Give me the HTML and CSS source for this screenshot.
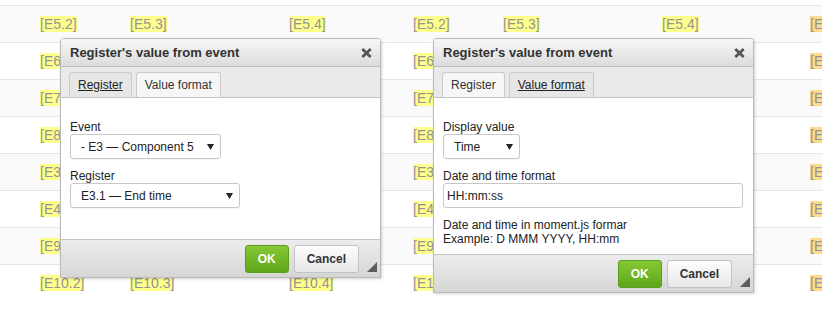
FILE: index.html
```html
<!DOCTYPE html>
<html lang="en">
<head>
<meta charset="utf-8">
<title>Register's value from event</title>
<link rel="stylesheet" href="styles.css">
</head>
<body>
<div class="shots">

  <div class="shot">
    <div class="page">
      <div class="grid">
        <div class="row"><span class="cell">[E5.2]</span><span class="cell">[E5.3]</span><span class="cell">[E5.4]</span><span class="cell cell--alt">[E5.5]</span></div>
        <div class="row"><span class="cell">[E6.2]</span><span class="cell">[E6.3]</span><span class="cell">[E6.4]</span><span class="cell cell--alt">[E6.5]</span></div>
        <div class="row"><span class="cell">[E7.2]</span><span class="cell">[E7.3]</span><span class="cell">[E7.4]</span><span class="cell cell--alt">[E7.5]</span></div>
        <div class="row"><span class="cell">[E8.2]</span><span class="cell">[E8.3]</span><span class="cell">[E8.4]</span><span class="cell cell--alt">[E8.5]</span></div>
        <div class="row"><span class="cell">[E3.2]</span><span class="cell">[E3.3]</span><span class="cell">[E3.4]</span><span class="cell cell--alt">[E3.5]</span></div>
        <div class="row"><span class="cell">[E4.2]</span><span class="cell">[E4.3]</span><span class="cell">[E4.4]</span><span class="cell cell--alt">[E4.5]</span></div>
        <div class="row"><span class="cell">[E9.2]</span><span class="cell">[E9.3]</span><span class="cell">[E9.4]</span><span class="cell cell--alt">[E9.5]</span></div>
        <div class="row row--last"><span class="cell">[E10.2]</span><span class="cell">[E10.3]</span><span class="cell">[E10.4]</span><span class="cell cell--alt">[E10.5]</span></div>
      </div>

      <div class="dialog">
        <div class="dialog-titlebar">
          <span class="dialog-title">Register's value from event</span>
          <span class="dialog-close"><svg width="11" height="10" viewBox="0 0 11 10"><path d="M1.3 1 L9.7 9 M9.7 1 L1.3 9" stroke="#555" stroke-width="2.8" fill="none"/></svg></span>
        </div>
        <div class="tabbar">
          <span class="tab tab--active">Register</span>
          <span class="tab">Value format</span>
        </div>
        <div class="dialog-body dialog-body--register">
          <div class="field">
            <div class="label">Event</div>
            <div class="select select--event"><span>- E3 — Component 5</span><svg width="7" height="6" viewBox="0 0 7 6"><polygon points="0,0 7,0 3.5,6" fill="#222"/></svg></div>
          </div>
          <div class="field">
            <div class="label">Register</div>
            <div class="select select--register"><span>E3.1 — End time</span><svg width="7" height="6" viewBox="0 0 7 6"><polygon points="0,0 7,0 3.5,6" fill="#222"/></svg></div>
          </div>
        </div>
        <div class="dialog-footer">
          <button class="btn btn--ok">OK</button>
          <button class="btn btn--cancel">Cancel</button>
          <svg class="grip" width="10" height="10" viewBox="0 0 10 10"><polygon points="10,0 10,10 0,10" fill="#5c5c5c"/></svg>
        </div>
      </div>
    </div>
  </div>

  <div class="shot shot--shifted">
    <div class="page">
      <div class="grid">
        <div class="row"><span class="cell">[E5.2]</span><span class="cell">[E5.3]</span><span class="cell">[E5.4]</span><span class="cell cell--alt">[E5.5]</span></div>
        <div class="row"><span class="cell">[E6.2]</span><span class="cell">[E6.3]</span><span class="cell">[E6.4]</span><span class="cell cell--alt">[E6.5]</span></div>
        <div class="row"><span class="cell">[E7.2]</span><span class="cell">[E7.3]</span><span class="cell">[E7.4]</span><span class="cell cell--alt">[E7.5]</span></div>
        <div class="row"><span class="cell">[E8.2]</span><span class="cell">[E8.3]</span><span class="cell">[E8.4]</span><span class="cell cell--alt">[E8.5]</span></div>
        <div class="row"><span class="cell">[E3.2]</span><span class="cell">[E3.3]</span><span class="cell">[E3.4]</span><span class="cell cell--alt">[E3.5]</span></div>
        <div class="row"><span class="cell">[E4.2]</span><span class="cell">[E4.3]</span><span class="cell">[E4.4]</span><span class="cell cell--alt">[E4.5]</span></div>
        <div class="row"><span class="cell">[E9.2]</span><span class="cell">[E9.3]</span><span class="cell">[E9.4]</span><span class="cell cell--alt">[E9.5]</span></div>
        <div class="row row--last"><span class="cell">[E10.2]</span><span class="cell">[E10.3]</span><span class="cell">[E10.4]</span><span class="cell cell--alt">[E10.5]</span></div>
      </div>

      <div class="dialog">
        <div class="dialog-titlebar">
          <span class="dialog-title">Register's value from event</span>
          <span class="dialog-close"><svg width="11" height="10" viewBox="0 0 11 10"><path d="M1.3 1 L9.7 9 M9.7 1 L1.3 9" stroke="#555" stroke-width="2.8" fill="none"/></svg></span>
        </div>
        <div class="tabbar">
          <span class="tab">Register</span>
          <span class="tab tab--active">Value format</span>
        </div>
        <div class="dialog-body dialog-body--format">
          <div class="field">
            <div class="label">Display value</div>
            <div class="select select--display"><span>Time</span><svg width="7" height="6" viewBox="0 0 7 6"><polygon points="0,0 7,0 3.5,6" fill="#222"/></svg></div>
          </div>
          <div class="field">
            <div class="label">Date and time format</div>
            <div class="input">HH:mm:ss</div>
          </div>
          <div class="help">Date and time in moment.js formar<br>Example: D MMM YYYY, HH:mm</div>
        </div>
        <div class="dialog-footer">
          <button class="btn btn--ok">OK</button>
          <button class="btn btn--cancel">Cancel</button>
          <svg class="grip" width="10" height="10" viewBox="0 0 10 10"><polygon points="10,0 10,10 0,10" fill="#5c5c5c"/></svg>
        </div>
      </div>
    </div>
  </div>

</div>
</body>
</html>
```

FILE: styles.css
```css
html, body {
  margin: 0;
  padding: 0;
  background: #fff;
  font-family: "Liberation Sans", Arial, sans-serif;
}

.shots {
  display: flex;
  width: 822px;
  height: 326px;
  overflow: hidden;
}

.shot {
  flex: none;
  width: 411px;
  height: 326px;
  overflow: hidden;
}

.page {
  position: relative;
  width: 480px;
  height: 326px;
  padding-top: 5px;
  box-sizing: border-box;
}

.shot--shifted .page {
  margin-left: -38px;
}

.row {
  height: 37px;
  box-sizing: border-box;
  border-top: 1px solid #e6e6e6;
  display: grid;
  grid-template-columns: 90px 159px 148px auto;
  padding-left: 40px;
  align-items: center;
}

.row:nth-child(odd) {
  background: #fafafa;
}

.row--last {
  background: #fff;
}

.cell {
  justify-self: start;
  font-size: 14px;
  line-height: 16px;
  color: #949494;
  background: #ffff8c;
}

.cell--alt {
  background: #ffd98c;
}

/* dialog */
.dialog {
  position: absolute;
  left: 60px;
  top: 38px;
  width: 321px;
  box-sizing: border-box;
  border: 1px solid #b9b9b9;
  border-radius: 4px 4px 0 0;
  background: #fff;
  box-shadow: 1px 1px 3px rgba(0, 0, 0, 0.18);
}

.dialog-titlebar {
  height: 28px;
  box-sizing: border-box;
  display: flex;
  align-items: center;
  justify-content: space-between;
  padding: 0 8px 0 9px;
  background: linear-gradient(#f7f7f7, #dcdcdc);
  border-bottom: 1px solid #bcbcbc;
  border-radius: 3px 3px 0 0;
}

.dialog-title {
  font-size: 13px;
  font-weight: bold;
  color: #333;
}

.dialog-close {
  display: flex;
  margin-top: 1px;
}

.tabbar {
  height: 31px;
  box-sizing: border-box;
  display: flex;
  align-items: flex-end;
  gap: 4px;
  padding: 5px 0 0 8px;
  background: #eaeaea;
  border-bottom: 1px solid #c4c4c4;
}

.tab {
  height: 25px;
  box-sizing: border-box;
  display: flex;
  align-items: center;
  padding: 0 8px;
  border: 1px solid #cbcbcb;
  border-bottom: none;
  border-radius: 3px 3px 0 0;
  background: #f6f6f6;
  font-size: 12px;
  color: #333;
}

.tab--active {
  background: #e6e6e6;
  text-decoration: underline;
  color: #222;
}

.dialog-body {
  padding: 22px 9px 9px;
  background: #fff;
}

.dialog-body--register {
  padding-bottom: 31px;
}

.dialog-body--format {
  padding-bottom: 8px;
}

.field + .field {
  margin-top: 10px;
}

.label {
  font-size: 12px;
  line-height: 14px;
  color: #222;
}

.select {
  display: flex;
  align-items: center;
  justify-content: space-between;
  height: 25px;
  box-sizing: border-box;
  padding: 0 6px 0 10px;
  border: 1px solid #c8c8c8;
  border-radius: 3px;
  background: #fff;
  box-shadow: 0 1px 1px rgba(0, 0, 0, 0.04);
  font-size: 12px;
  color: #222;
}

.select--event { width: 151px; }
.select--register { width: 170px; }
.select--display { width: 77px; }

.input {
  display: flex;
  align-items: center;
  width: 300px;
  height: 25px;
  box-sizing: border-box;
  padding: 0 3px;
  border: 1px solid #c8c8c8;
  border-radius: 3px;
  background: #fff;
  font-size: 12px;
  color: #222;
}

.help {
  margin-top: 10px;
  font-size: 12px;
  line-height: 14px;
  color: #222;
}

.dialog-footer {
  position: relative;
  display: flex;
  justify-content: flex-end;
  gap: 5px;
  padding: 5px 21px 4px;
  border-top: 1px solid #c4c4c4;
  background: linear-gradient(#ececec, #d6d6d6);
}

.btn {
  height: 28px;
  box-sizing: border-box;
  padding: 0 12px;
  border-radius: 3px;
  font-family: "Liberation Sans", Arial, sans-serif;
  font-size: 12px;
  font-weight: bold;
  cursor: pointer;
}

.btn--ok {
  border: 1px solid #5b9d1f;
  background: linear-gradient(#86c834, #5ea61a);
  color: #fff;
}

.btn--cancel {
  border: 1px solid #c3c3c3;
  background: linear-gradient(#fdfdfd, #e7e7e7);
  color: #333;
}

.grip {
  position: absolute;
  right: 3px;
  bottom: 5px;
}
```
